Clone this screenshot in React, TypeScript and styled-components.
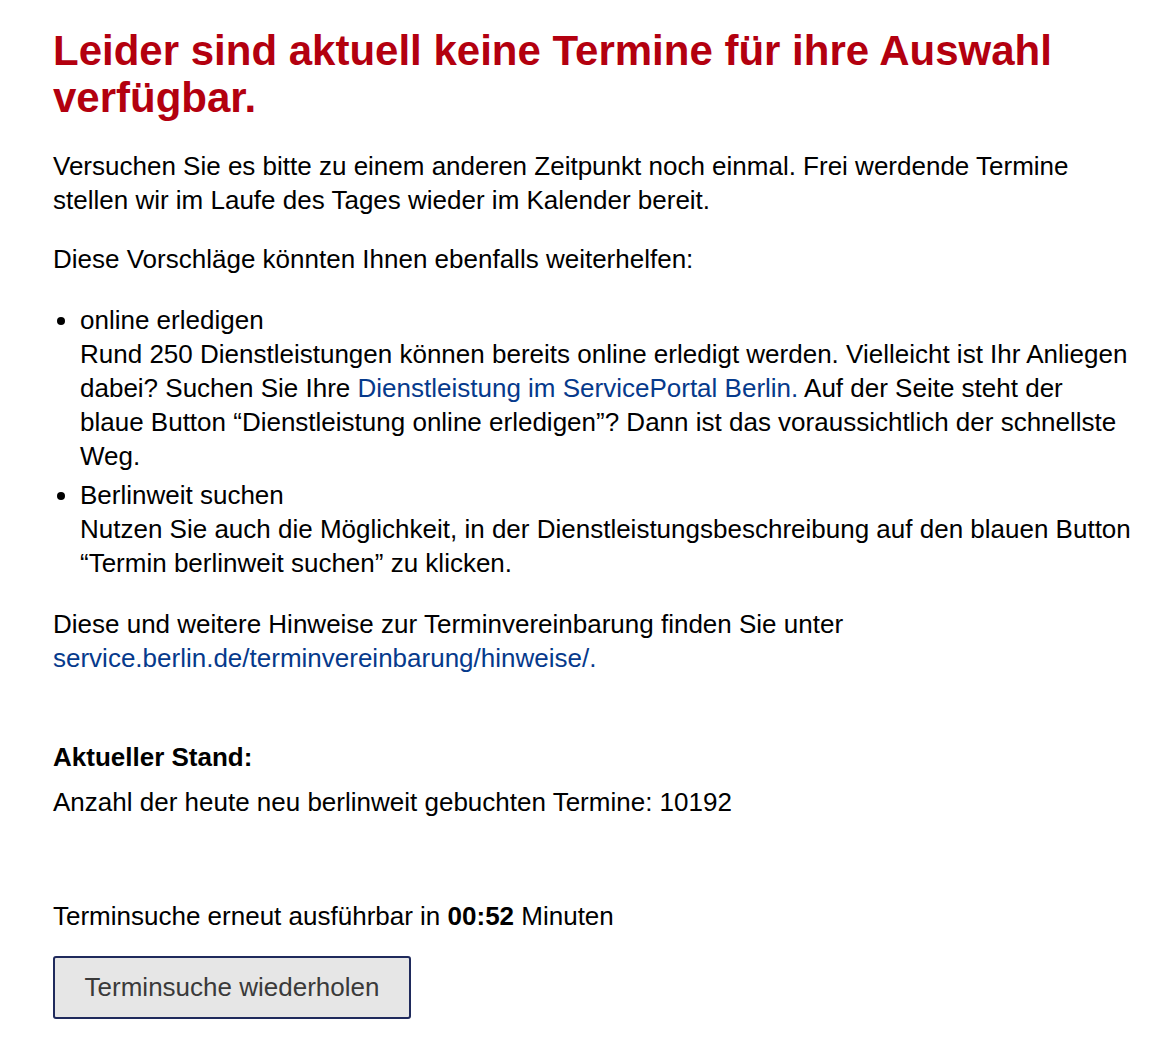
import React from "react";
import styled, { createGlobalStyle } from "styled-components";

const Global = createGlobalStyle`
  html, body { margin: 0; padding: 0; background: #ffffff; }
  body { font-family: "Liberation Sans", Arial, Helvetica, sans-serif; color: #000; }
`;

const Page = styled.main`
  padding: 27px 35px 30px 53px;
  font-size: 26px;
  line-height: 34px;
`;

const Title = styled.h1`
  margin: 0 0 28px;
  font-size: 42px;
  line-height: 47px;
  font-weight: 700;
  color: #b3000f;
`;

const Para = styled.p<{ $mt?: number; $mb?: number }>`
  margin: ${(p) => p.$mt ?? 0}px 0 ${(p) => p.$mb ?? 25}px;
`;

const List = styled.ul`
  margin: 0 0 27px;
  padding-left: 27px;
  list-style: disc;
`;

const Item = styled.li`
  margin-bottom: 5px;
  &:last-child { margin-bottom: 0; }
`;

const Link = styled.a`
  color: #063a8c;
  text-decoration: none;
`;

const Subhead = styled.h3`
  margin: 65px 0 11px;
  font-size: 26px;
  line-height: 34px;
  font-weight: 700;
`;

const Button = styled.button`
  display: block;
  margin-top: 23px;
  width: 358px;
  height: 63px;
  padding: 0;
  background: #e6e6e6;
  border: 2px solid #1f2a5c;
  border-radius: 3px;
  font-family: "Liberation Sans", Arial, Helvetica, sans-serif;
  font-size: 26px;
  color: #3a3a3a;
  cursor: pointer;
`;

export default function App() {
  return (
    <>
      <Global />
      <Page>
        <Title>Leider sind aktuell keine Termine für ihre Auswahl verfügbar.</Title>
        <Para>
          Versuchen Sie es bitte zu einem anderen Zeitpunkt noch einmal. Frei werdende Termine
          stellen wir im Laufe des Tages wieder im Kalender bereit.
        </Para>
        <Para $mb={27}>Diese Vorschläge könnten Ihnen ebenfalls weiterhelfen:</Para>
        <List>
          <Item>
            online erledigen
            <br />
            Rund 250 Dienstleistungen können bereits online erledigt werden. Vielleicht ist Ihr
            Anliegen dabei? Suchen Sie Ihre{" "}
            <Link href="#">Dienstleistung im ServicePortal Berlin.</Link> Auf der Seite steht der
            blaue Button “Dienstleistung online erledigen”? Dann ist das voraussichtlich der
            schnellste Weg.
          </Item>
          <Item>
            Berlinweit suchen
            <br />
            Nutzen Sie auch die Möglichkeit, in der Dienstleistungsbeschreibung auf den blauen
            Button “Termin berlinweit suchen” zu klicken.
          </Item>
        </List>
        <Para $mb={0}>
          Diese und weitere Hinweise zur Terminvereinbarung finden Sie unter{" "}
          <Link href="#">service.berlin.de/terminvereinbarung/hinweise/.</Link>
        </Para>
        <Subhead>Aktueller Stand:</Subhead>
        <Para $mb={80}>Anzahl der heute neu berlinweit gebuchten Termine: 10192</Para>
        <Para $mb={0}>
          Terminsuche erneut ausführbar in <strong>00:52</strong> Minuten
        </Para>
        <Button type="button">Terminsuche wiederholen</Button>
      </Page>
    </>
  );
}
